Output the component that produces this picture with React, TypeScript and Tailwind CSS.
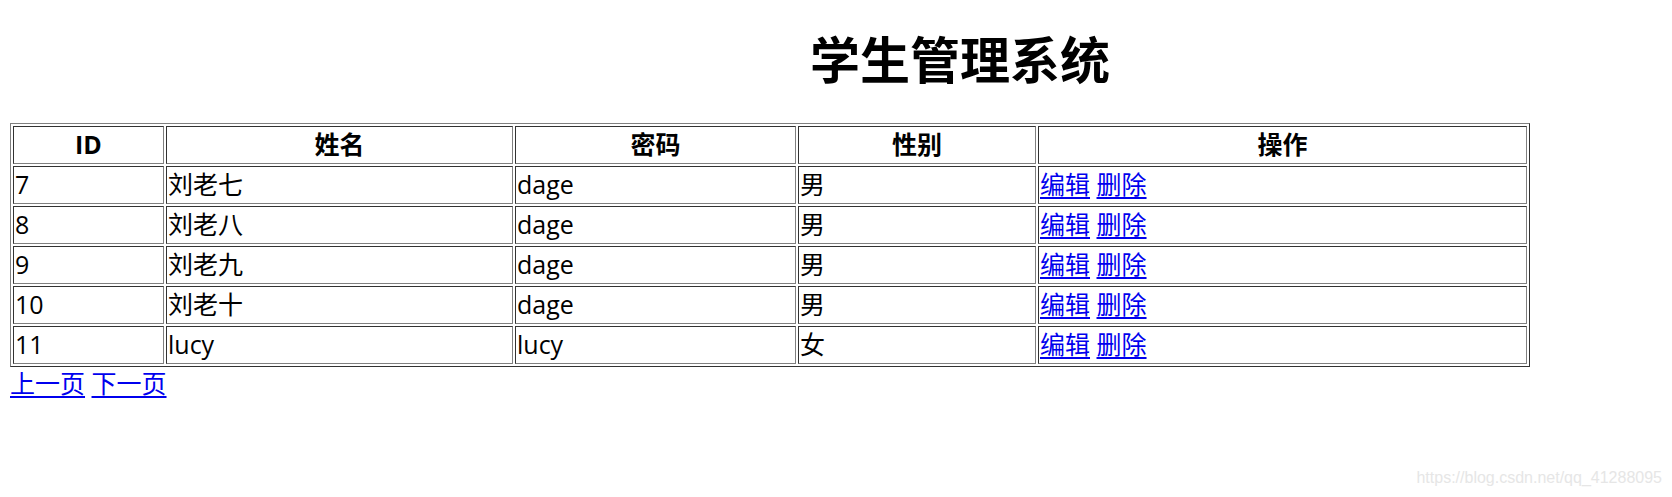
import React from 'react';

interface Student {
  id: number;
  name: string;
  password: string;
  gender: string;
}

const students: Student[] = [
  { id: 7, name: '刘老七', password: 'dage', gender: '男' },
  { id: 8, name: '刘老八', password: 'dage', gender: '男' },
  { id: 9, name: '刘老九', password: 'dage', gender: '男' },
  { id: 10, name: '刘老十', password: 'dage', gender: '男' },
  { id: 11, name: 'lucy', password: 'lucy', gender: '女' },
];

const bodyFont = "font-['Open_Sans','Noto_Sans_CJK_SC',sans-serif]";

// inset look of border="1" cells
const cell =
  'border border-t-[#333] border-l-[#333] border-b-[#808080] border-r-[#808080] px-[1px] pt-[1px] pb-[2px] h-[38px] leading-[33px] align-middle';

function Link({ children }: { children: React.ReactNode }) {
  return (
    <a href="#" className="text-[#0000ee] underline underline-offset-[3px]">
      {children}
    </a>
  );
}

export default function App() {
  return (
    <div className={`relative w-full h-[497px] bg-white text-black pt-[27px] ${bodyFont}`}>
      <h1 className="pl-[248px] text-center text-[50px] leading-[60px] font-bold font-['Noto_Sans_CJK_SC',sans-serif]">
        学生管理系统
      </h1>

      <table className="mt-[36px] ml-[10px] w-[1520px] table-fixed border-separate border-spacing-[2px] border border-t-[#808080] border-l-[#808080] border-b-[#333] border-r-[#333] text-[25px]">
        <thead>
          <tr>
            <th className={`${cell} w-[151px] font-bold text-center`}>ID</th>
            <th className={`${cell} w-[347px] font-bold text-center`}>姓名</th>
            <th className={`${cell} w-[281px] font-bold text-center`}>密码</th>
            <th className={`${cell} w-[238px] font-bold text-center`}>性别</th>
            <th className={`${cell} w-[489px] font-bold text-center`}>操作</th>
          </tr>
        </thead>
        <tbody>
          {students.map(s => (
            <tr key={s.id}>
              <td className={cell}>{s.id}</td>
              <td className={cell}>{s.name}</td>
              <td className={cell}>{s.password}</td>
              <td className={cell}>{s.gender}</td>
              <td className={cell}>
                <Link>编辑</Link> <Link>删除</Link>
              </td>
            </tr>
          ))}
        </tbody>
      </table>

      <div className="ml-[10px] text-[25px] leading-[33px]">
        <Link>上一页</Link> <Link>下一页</Link>
      </div>

      <div className="absolute top-[469px] right-[10px] text-[16px] leading-[18px] text-[#e6e6e6] font-['Liberation_Sans',Arial,sans-serif]">
        https://blog.csdn.net/qq_41288095
      </div>
    </div>
  );
}
